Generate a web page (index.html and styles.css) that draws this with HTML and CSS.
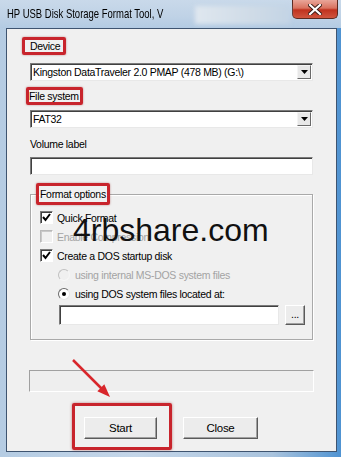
FILE: index.html
```html
<!DOCTYPE html>
<html lang="en">
<head>
    <meta charset="UTF-8">
    <meta name="viewport" content="width=device-width, initial-scale=1.0">
    <title>HP USB Disk Storage Format Tool</title>
    <link rel="stylesheet" href="styles.css">
</head>
<body>
    <div class="window">
        <div class="titlebar">
            <span class="title"><span class="title-text">HP USB Disk Storage Format Tool, V</span></span>
            <span class="title-blur"></span>
            <span class="close-btn">
                <svg width="14" height="11" viewBox="0 0 14 11">
                    <path d="M2 1 L12 10 M12 1 L2 10" stroke="#3a1a14" stroke-width="4" stroke-linecap="square"/>
                    <path d="M2 1 L12 10 M12 1 L2 10" stroke="#fff" stroke-width="2.2" stroke-linecap="square"/>
                </svg>
            </span>
        </div>

        <div class="client">
            <div class="mark mark-device">Device</div>
            <div class="combo">
                <span class="combo-text">Kingston DataTraveler 2.0 PMAP (478 MB) (G:\)</span>
                <span class="combo-btn"><svg width="7" height="4" viewBox="0 0 7 4"><path d="M0 0 H7 L3.5 4 Z" fill="#000"/></svg></span>
            </div>

            <div class="mark mark-fs">File system</div>
            <div class="combo combo-fs">
                <span class="combo-text">FAT32</span>
                <span class="combo-btn"><svg width="7" height="4" viewBox="0 0 7 4"><path d="M0 0 H7 L3.5 4 Z" fill="#000"/></svg></span>
            </div>

            <div class="label">Volume label</div>
            <div class="textbox"></div>

            <fieldset class="group">
                <legend class="mark mark-legend">Format options</legend>
                <div class="row">
                    <span class="check"><svg width="9" height="9" viewBox="0 0 9 9"><path d="M1 4 L3.5 7 L8 1" stroke="#000" stroke-width="2" fill="none"/></svg></span>
                    Quick Format
                </div>
                <div class="row disabled">
                    <span class="check check-off"></span>
                    Enable Compression
                </div>
                <div class="row">
                    <span class="check"><svg width="9" height="9" viewBox="0 0 9 9"><path d="M1 4 L3.5 7 L8 1" stroke="#000" stroke-width="2" fill="none"/></svg></span>
                    Create a DOS startup disk
                </div>
                <div class="row sub disabled">
                    <span class="radio radio-off"></span>
                    using internal MS-DOS system files
                </div>
                <div class="row sub">
                    <span class="radio"><span class="dot"></span></span>
                    using DOS system files located at:
                </div>
                <div class="path-row">
                    <div class="textbox path"></div>
                    <div class="btn btn-dots">...</div>
                </div>
            </fieldset>

            <div class="progress"></div>

            <div class="actions">
                <div class="mark-btn">
                    <div class="btn btn-main">Start</div>
                </div>
                <div class="btn btn-main btn-close">Close</div>
            </div>
        </div>

        <!-- annotation arrow and watermark drawn over the dialog -->
        <svg class="arrow" width="60" height="55" viewBox="0 0 60 55">
            <line x1="13" y1="10" x2="42" y2="39" stroke="#d8262b" stroke-width="2.5"/>
            <polygon points="50,47 44.3,34.3 37.3,41.3" fill="#d8262b"/>
        </svg>
        <div class="watermark">4rbshare.com</div>
    </div>
</body>
</html>
```

FILE: styles.css
```css
html, body {
    margin: 0;
    padding: 0;
}

body {
    width: 341px;
    height: 457px;
    overflow: hidden;
    font-family: "Liberation Sans", Arial, sans-serif;
}

.window {
    position: relative;
    width: 341px;
    height: 457px;
    box-sizing: border-box;
    padding: 0 4px 5px 6px;
    background: linear-gradient(90deg, #b5cce3 0%, #c4d6e9 40%, #a9c3dd 80%, #4f93d2 100%);
}

.titlebar {
    display: flex;
    align-items: flex-start;
    height: 28px;
    margin-left: -6px;
    margin-right: -4px;
    background: linear-gradient(180deg, #c9d9ea 0%, #bfd2e6 60%, #b3cbe3 100%);
}

.title {
    width: 188px;
    margin: 6px 0 0 7px;
    font-size: 13px;
    line-height: 15px;
    color: #000;
    white-space: nowrap;
}

/* the title font of the shot is much narrower than Arial */
.title-text {
    display: inline-block;
    transform: scaleX(0.73);
    transform-origin: left center;
}

.title-blur {
    width: 95px;
    height: 18px;
    margin-top: 6px;
    background: linear-gradient(90deg, #dfe7ef, #cfdbe7 60%, #c3d4e5);
    filter: blur(2px);
}

.close-btn {
    display: flex;
    align-items: center;
    justify-content: center;
    width: 44px;
    height: 18px;
    margin-left: auto;
    margin-right: 3px;
    border: 1px solid #5c2a20;
    border-top: none;
    border-radius: 0 0 5px 5px;
    background: linear-gradient(180deg, #e9a699 0%, #d9725f 45%, #c0321e 55%, #d0553e 100%);
}

.client {
    height: 424px;
    box-sizing: border-box;
    border: 1px solid #3e5470;
    padding: 0 23px;
    background: #f0f0f0;
    font-size: 10.5px;
    letter-spacing: -0.3px;
    color: #000;
}

.mark {
    width: fit-content;
    border: 3px solid #c8242c;
    border-radius: 2px;
    box-shadow: 0 0 2px rgba(140, 20, 20, 0.5);
    line-height: 12px;
}

.mark-device {
    margin: 8px 0 0 -8px;
    padding: 0 3px 0 5px;
}

.mark-fs {
    margin: 6px 0 0 -4px;
    padding: 0 1px 0 0;
}

.combo {
    display: flex;
    align-items: center;
    height: 18px;
    margin-top: 8px;
    box-sizing: border-box;
    border: 1px solid;
    border-color: #7a7a7a #e8e8e8 #e8e8e8 #7a7a7a;
    box-shadow: inset 1px 1px 0 #404040;
    background: #fff;
}

.combo-fs {
    margin-top: 5px;
}

.combo-text {
    flex: 1;
    padding-left: 2px;
    white-space: nowrap;
}

.combo-btn {
    display: flex;
    align-items: center;
    justify-content: center;
    width: 14px;
    height: 14px;
    margin-right: 1px;
    box-sizing: border-box;
    border: 1px solid;
    border-color: #f4f4f4 #6a6a6a #6a6a6a #f4f4f4;
    background: #e8e8e8;
}

.label {
    margin-top: 10px;
    line-height: 13px;
}

.textbox {
    height: 18px;
    margin-top: 6px;
    box-sizing: border-box;
    border: 1px solid;
    border-color: #7a7a7a #e8e8e8 #e8e8e8 #7a7a7a;
    box-shadow: inset 1px 1px 0 #404040;
    background: #fff;
}

.group {
    margin: 8px 0 0 0;
    padding: 3px 6px 14px 9px;
    border: 1px solid #a9a9a9;
    box-shadow: inset 1px 1px 0 #fff, 1px 1px 0 #fff;
}

.mark-legend {
    margin-left: -4px;
    padding: 2px 1px 2px 1px;
}

.row {
    display: flex;
    align-items: center;
    height: 19px;
}

.row.disabled {
    color: #a3a3a3;
}

.row.sub {
    margin-left: 18px;
}

.check {
    display: flex;
    align-items: center;
    justify-content: center;
    width: 13px;
    height: 13px;
    margin-right: 4px;
    box-sizing: border-box;
    border: 1px solid;
    border-color: #7a7a7a #fff #fff #7a7a7a;
    box-shadow: inset 1px 1px 0 #404040;
    background: #fff;
}

.check-off {
    border-color: #b9b9b9 #fff #fff #b9b9b9;
    box-shadow: inset 1px 1px 0 #c9c9c9;
    background: #f0f0f0;
}

.radio {
    display: flex;
    align-items: center;
    justify-content: center;
    width: 12px;
    height: 12px;
    margin-right: 5px;
    box-sizing: border-box;
    border-radius: 50%;
    border: 1px solid;
    border-color: #6a6a6a #e6e6e6 #e6e6e6 #6a6a6a;
    background: #fff;
}

.radio-off {
    border-color: #c0c0c0 #f6f6f6 #f6f6f6 #c0c0c0;
    background: #f0f0f0;
}

.dot {
    width: 4px;
    height: 4px;
    border-radius: 50%;
    background: #000;
}

.path-row {
    display: flex;
    align-items: center;
    gap: 6px;
    margin: 2px 0 0 19px;
}

.path {
    width: 220px;
    height: 20px;
    margin-top: 0;
}

.btn {
    display: flex;
    align-items: center;
    justify-content: center;
    box-sizing: border-box;
    border: 1px solid;
    border-color: #fff #5a5a5a #5a5a5a #fff;
    box-shadow: inset -1px -1px 0 #a0a0a0;
    background: #ececec;
}

.btn-dots {
    width: 20px;
    height: 20px;
    padding-bottom: 3px;
}

.progress {
    height: 22px;
    margin: 30px -1px 0 -1px;
    box-sizing: border-box;
    border: 1px solid;
    border-color: #a0a0a0 #fff #fff #a0a0a0;
    background: #eeeeee;
}

.actions {
    display: flex;
    align-items: flex-start;
    margin: 11px 0 0 42px;
}

.mark-btn {
    padding: 11px 12px 8px 9px;
    border: 3px solid #c8242c;
    border-radius: 2px;
    box-shadow: 0 0 3px rgba(140, 20, 20, 0.5);
}

.btn-main {
    width: 73px;
    height: 22px;
    font-size: 11.5px;
}

.btn-close {
    width: 75px;
    margin: 14px 0 0 11px;
}

.arrow {
    position: absolute;
    left: 60px;
    top: 350px;
}

.watermark {
    position: absolute;
    left: 73px;
    top: 214px;
    font-size: 32px;
    line-height: 32px;
    letter-spacing: 0;
    color: #111;
    white-space: nowrap;
}
```
